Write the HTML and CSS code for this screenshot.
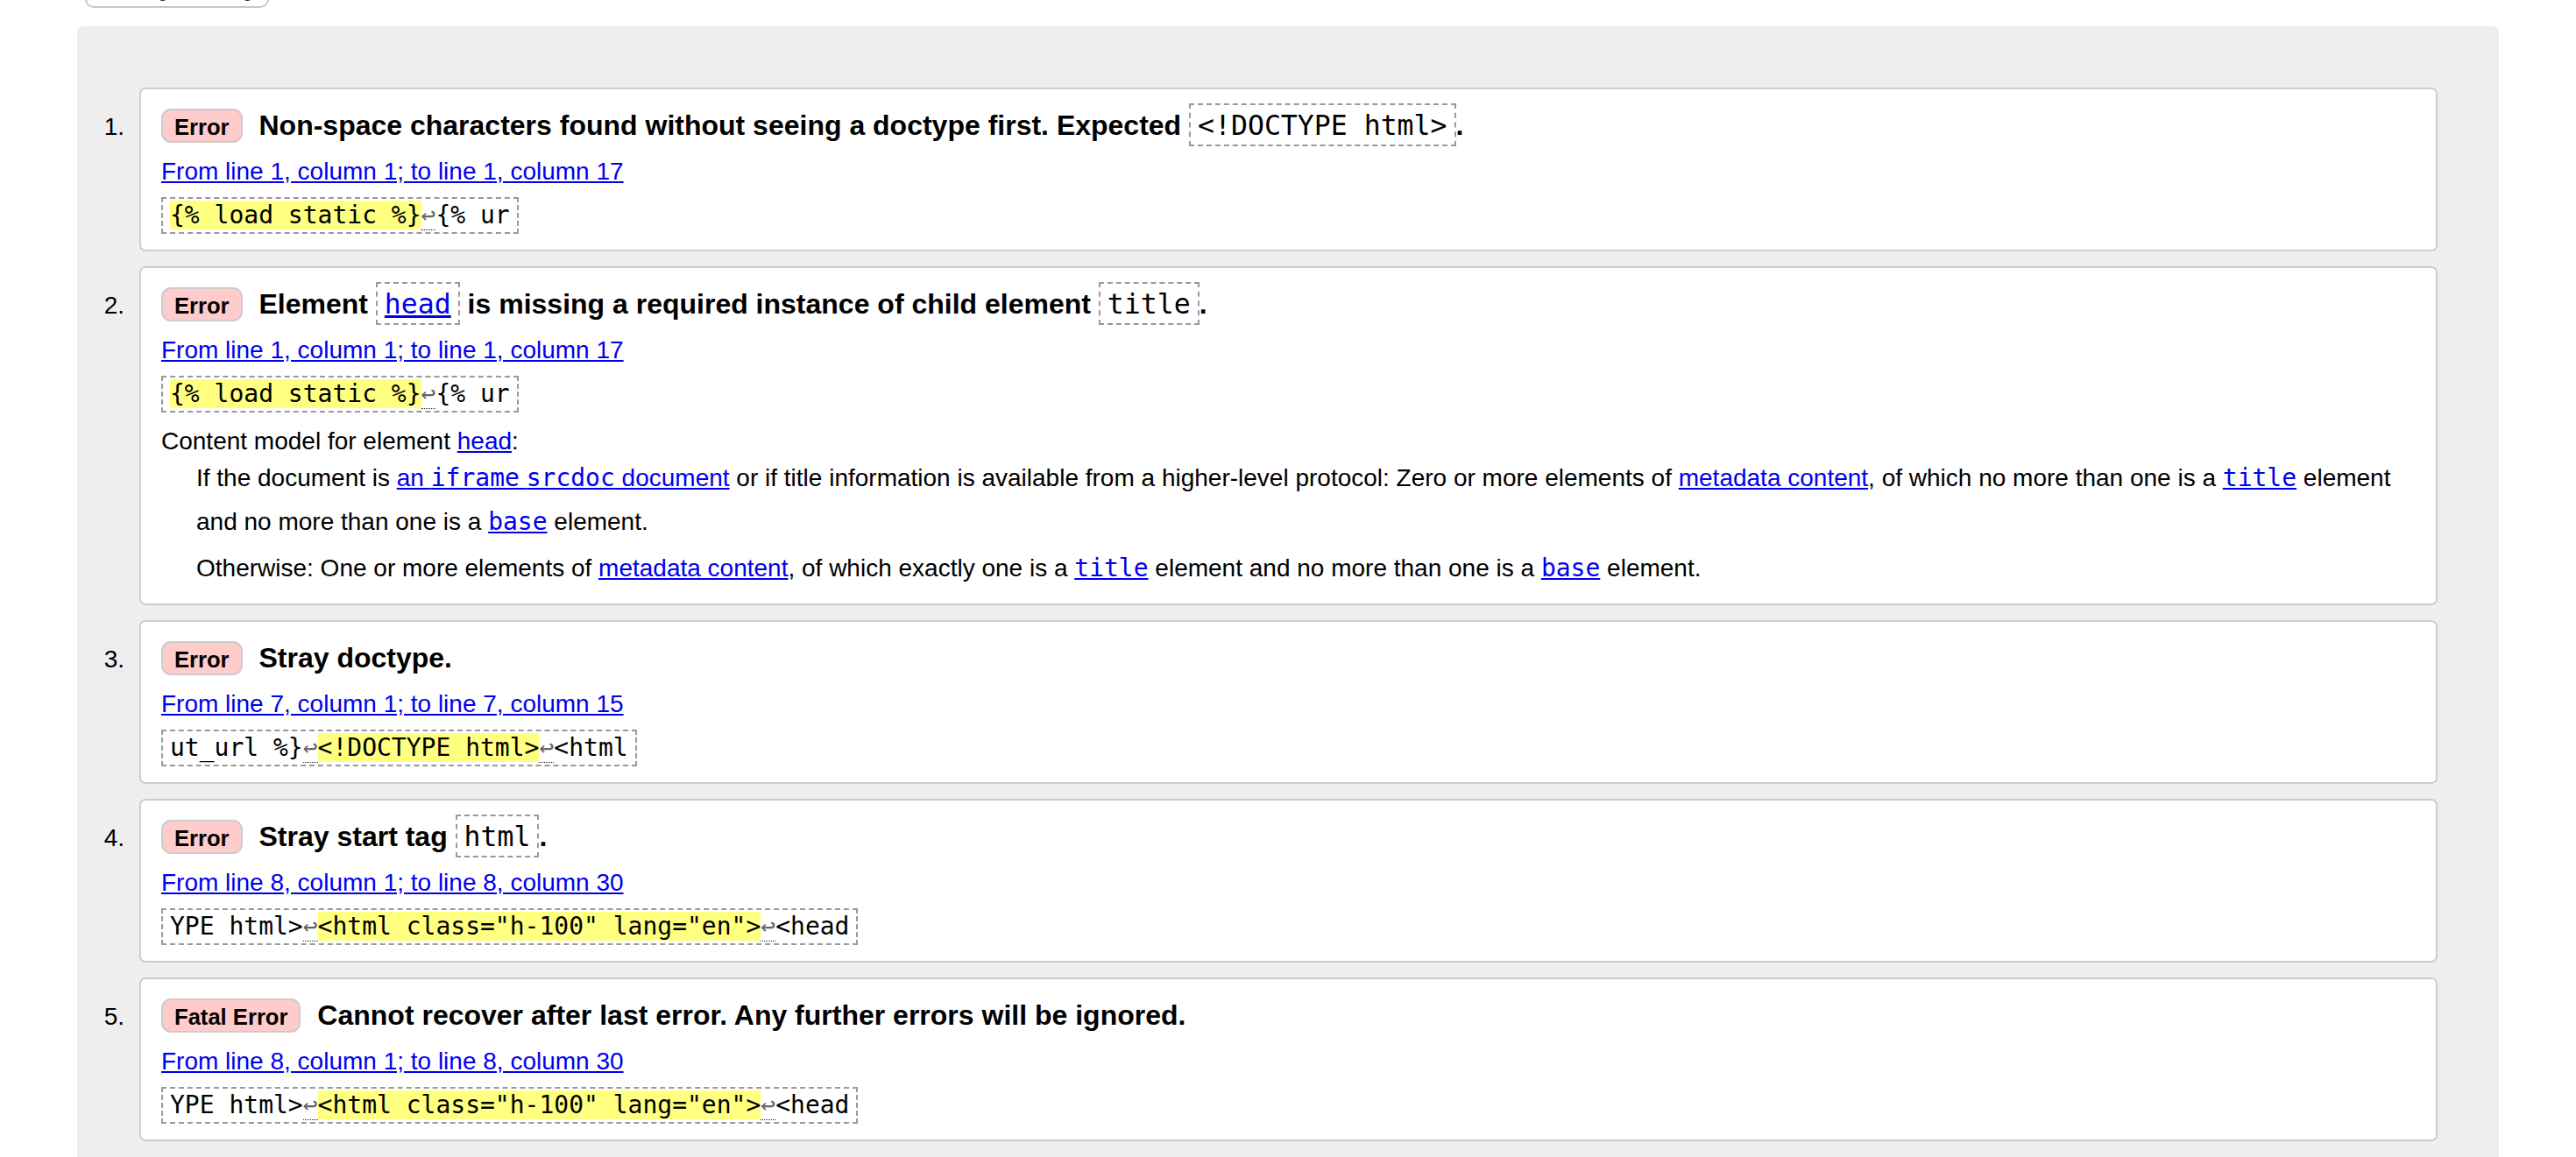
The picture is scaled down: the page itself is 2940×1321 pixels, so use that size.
FILE: index.html
```html
<!DOCTYPE html>
<html lang="en">
<head>
<meta charset="utf-8">
<title>Nu Html Checker – results</title>
<link rel="stylesheet" href="styles.css">
</head>
<body>
<div class="toolbar"><button class="filter-btn" type="button">Message Filtering</button></div>
<div class="results">
  <ol class="messages">
    <li class="item">
      <span class="num">1.</span>
      <div class="card">
        <p class="msg"><strong class="badge">Error</strong> <span>Non-space characters found without seeing a doctype first. Expected <code class="name">&lt;!DOCTYPE html&gt;</code>.</span></p>
        <p class="location"><a href="#l1c17">From line 1, column 1; to line 1, column 17</a></p>
        <p class="extract"><code><mark class="hl">{% load static %}</mark><span class="lf" title="Line break">↩</span>{% ur</code></p>
      </div>
    </li>
    <li class="item">
      <span class="num">2.</span>
      <div class="card">
        <p class="msg"><strong class="badge">Error</strong> <span>Element <code class="name"><a href="#head">head</a></code> is missing a required instance of child element <code class="name">title</code>.</span></p>
        <p class="location"><a href="#l1c17">From line 1, column 1; to line 1, column 17</a></p>
        <p class="extract"><code><mark class="hl">{% load static %}</mark><span class="lf" title="Line break">↩</span>{% ur</code></p>
        <dl class="elaboration">
          <dt>Content model for element <a href="#head">head</a>:</dt>
          <dd>If the document is <a href="#srcdoc">an <code class="kw">iframe</code> <code class="kw">srcdoc</code> document</a> or if title information is available from a higher-level protocol: Zero or more elements of <a href="#metadata">metadata content</a>, of which no more than one is a <a href="#title"><code class="kw">title</code></a> element and no more than one is a <a href="#base"><code class="kw">base</code></a> element.</dd>
          <dd>Otherwise: One or more elements of <a href="#metadata">metadata content</a>, of which exactly one is a <a href="#title"><code class="kw">title</code></a> element and no more than one is a <a href="#base"><code class="kw">base</code></a> element.</dd>
        </dl>
      </div>
    </li>
    <li class="item">
      <span class="num">3.</span>
      <div class="card">
        <p class="msg"><strong class="badge">Error</strong> <span>Stray doctype.</span></p>
        <p class="location"><a href="#l7c15">From line 7, column 1; to line 7, column 15</a></p>
        <p class="extract"><code>ut_url %}<span class="lf" title="Line break">↩</span><mark class="hl">&lt;!DOCTYPE html&gt;</mark><span class="lf" title="Line break">↩</span>&lt;html</code></p>
      </div>
    </li>
    <li class="item">
      <span class="num">4.</span>
      <div class="card">
        <p class="msg"><strong class="badge">Error</strong> <span>Stray start tag <code class="name">html</code>.</span></p>
        <p class="location"><a href="#l8c30">From line 8, column 1; to line 8, column 30</a></p>
        <p class="extract"><code>YPE html&gt;<span class="lf" title="Line break">↩</span><mark class="hl">&lt;html class="h-100" lang="en"&gt;</mark><span class="lf" title="Line break">↩</span>&lt;head</code></p>
      </div>
    </li>
    <li class="item">
      <span class="num">5.</span>
      <div class="card">
        <p class="msg"><strong class="badge">Fatal Error</strong> <span>Cannot recover after last error. Any further errors will be ignored.</span></p>
        <p class="location"><a href="#l8c30">From line 8, column 1; to line 8, column 30</a></p>
        <p class="extract"><code>YPE html&gt;<span class="lf" title="Line break">↩</span><mark class="hl">&lt;html class="h-100" lang="en"&gt;</mark><span class="lf" title="Line break">↩</span>&lt;head</code></p>
      </div>
    </li>
  </ol>
</div>
</body>
</html>
```

FILE: styles.css
```css
* {
  box-sizing: border-box;
}

html,
body {
  margin: 0;
  padding: 0;
  background: #fff;
}

body {
  font-family: "Liberation Sans", Arial, Helvetica, sans-serif;
  font-size: 28px;
  line-height: 32px;
  color: #000;
}

a {
  color: #0000ee;
  text-decoration: underline;
}

/* top toolbar (only its lower edge is in view) */
.toolbar {
  height: 9px;
  padding-left: 97px;
  display: flex;
  align-items: flex-end;
}

.filter-btn {
  flex: none;
  font-family: "Liberation Sans", Arial, Helvetica, sans-serif;
  font-size: 22px;
  line-height: 25px;
  padding: 6px 16px;
  border: 2px solid #c8c8c8;
  border-radius: 10px;
  background: #fff;
  color: #222;
}

/* results panel */
.results {
  margin: 21px 88px 0;
  background: #eeeeee;
  border-radius: 6px 6px 0 0;
}

.messages {
  list-style: none;
  margin: 0;
  padding: 70px 70px 70px 0;
}

.item {
  display: flex;
  align-items: baseline;
}

.item + .item {
  margin-top: 17px;
}

.num {
  flex: 0 0 71px;
  text-align: right;
  padding-right: 17px;
  line-height: 32px;
}

.card {
  flex: 1 1 auto;
  min-width: 0;
  background: #fff;
  border: 2px solid #cdcdcd;
  border-radius: 7px;
  padding: 22px 23px 18px;
}

.msg {
  margin: 0;
  font-size: 32px;
  line-height: 34px;
  font-weight: bold;
}

.badge {
  display: inline-block;
  font-size: 25.6px;
  line-height: 27px;
  font-weight: bold;
  padding: 6px 13px 2px;
  border: 2px solid #cccccc;
  border-radius: 11px;
  background: #ffcccc;
  margin-right: 10px;
}

.name {
  font-family: "DejaVu Sans Mono", Menlo, monospace;
  font-size: 31.5px;
  font-weight: normal;
  border: 2px dashed #999;
  padding: 5px 8px 4px;
}

.location {
  margin: 17px 0 0;
}

.extract {
  display: flex;
  margin: 13px 0 0;
}

.extract code {
  font-family: "DejaVu Sans Mono", Menlo, monospace;
  font-size: 28px;
  line-height: 32px;
  white-space: pre;
  padding: 3px 8px;
  border: 2px dashed #999;
}

.hl {
  background: #ffff80;
  color: inherit;
}

.lf {
  color: #666;
  border-bottom: 1px dotted #222;
}

.elaboration {
  margin: 17px 0 -3px;
}

.elaboration dt {
  line-height: 32px;
}

.elaboration dd {
  margin: 1px 0 0 40px;
  line-height: 50px;
}

.elaboration dd + dd {
  margin-top: 3px;
}

.kw {
  font-family: "DejaVu Sans Mono", Menlo, monospace;
  font-size: 28px;
}
```
